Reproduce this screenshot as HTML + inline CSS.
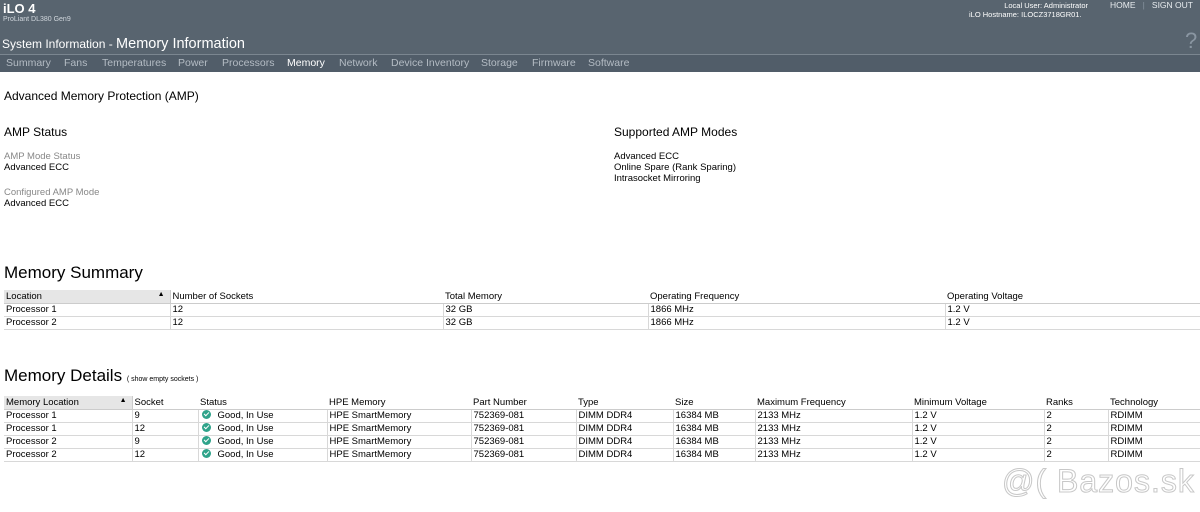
<!DOCTYPE html><html><head><style>
*{margin:0;padding:0;box-sizing:border-box}
body{width:1200px;height:512px;overflow:hidden;background:#fff;font-family:"Liberation Sans",Arial,sans-serif;color:#000;position:relative}
.a{position:absolute;white-space:nowrap}
#hd{position:absolute;left:0;top:0;width:1200px;height:55px;background:#58646f;border-bottom:1px solid #7b8690}
#nv{position:absolute;left:0;top:55px;width:1200px;height:17px;background:#515d69}
.nv{position:absolute;top:57px;font-size:10.5px;color:#b4bcc4}
.w{color:#fff}
table{position:absolute;border-collapse:collapse;font-size:9.5px;left:4px}
td{height:13px;padding:0 2px;border-bottom:1px solid #d8d8d8;border-left:1px solid #d8d8d8;vertical-align:middle}
td:first-child{border-left:none}
tr.h td{border-left:none;border-bottom:1px solid #ccc}
tr.h td:first-child{background:#e6e6e6;border-right:1px solid #ccc}
.ck{display:inline-block;width:9px;height:9px;border-radius:50%;background:#2fa38a;vertical-align:-1px;margin:0 7px 0 1px;position:relative}
.ck:after{content:"";position:absolute;left:2px;top:1.5px;width:4px;height:2px;border-left:1.5px solid #fff;border-bottom:1.5px solid #fff;transform:rotate(-45deg)}
</style></head><body>
<div id="hd"></div><div id="nv"></div>
<div class="a w" style="left:3px;top:1px;font-size:13px;font-weight:bold">iLO 4</div>
<div class="a" style="left:3px;top:16px;font-size:7px;color:#d0d6dc">ProLiant DL380 Gen9</div>
<div class="a w" style="left:2px;top:36px;font-size:12px">System Information - <span style="font-size:14.5px">Memory Information</span></div>
<div class="a w" style="left:1000px;top:1px;font-size:7.5px;text-align:right;width:88px">Local User: Administrator</div>
<div class="a w" style="left:969px;top:10px;font-size:7.5px">iLO Hostname: ILOCZ3718GR01.</div>
<div class="a" style="left:1110px;top:0px;font-size:8.5px;color:#e8ecef">HOME &nbsp;&nbsp;<span style="color:#8995a0">|</span>&nbsp;&nbsp; SIGN OUT</div>
<div class="a" style="left:1185px;top:28px;font-size:22px;color:#8a96a2">?</div>
<div class="nv" style="left:6px">Summary</div><div class="nv" style="left:64px">Fans</div><div class="nv" style="left:102px">Temperatures</div><div class="nv" style="left:178px">Power</div><div class="nv" style="left:222px">Processors</div><div class="nv w" style="left:287px">Memory</div><div class="nv" style="left:339px">Network</div><div class="nv" style="left:391px">Device Inventory</div><div class="nv" style="left:481px">Storage</div><div class="nv" style="left:532px">Firmware</div><div class="nv" style="left:588px">Software</div>
<div class="a" style="left:4px;top:89px;font-size:12px">Advanced Memory Protection (AMP)</div>
<div class="a" style="left:4px;top:125px;font-size:12px">AMP Status</div>
<div class="a" style="left:4px;top:151px;font-size:9.5px;color:#888">AMP Mode Status</div>
<div class="a" style="left:4px;top:162px;font-size:9.5px">Advanced ECC</div>
<div class="a" style="left:4px;top:187px;font-size:9.5px;color:#888">Configured AMP Mode</div>
<div class="a" style="left:4px;top:198px;font-size:9.5px">Advanced ECC</div>
<div class="a" style="left:614px;top:125px;font-size:12px">Supported AMP Modes</div>
<div class="a" style="left:614px;top:151px;font-size:9.5px;line-height:11px">Advanced ECC<br>Online Spare (Rank Sparing)<br>Intrasocket Mirroring</div>
<div class="a" style="left:4px;top:263px;font-size:17px">Memory Summary</div>
<table style="top:290px;width:1196px">
<tr class="h"><td style="width:166px">Location<span style="float:right;font-size:7px;margin-right:3px">▲</span></td><td style="width:273px">Number of Sockets</td><td style="width:205px">Total Memory</td><td style="width:297px">Operating Frequency</td><td>Operating Voltage</td></tr>
<tr><td>Processor 1</td><td>12</td><td>32 GB</td><td>1866 MHz</td><td>1.2 V</td></tr>
<tr><td>Processor 2</td><td>12</td><td>32 GB</td><td>1866 MHz</td><td>1.2 V</td></tr>
</table>
<div class="a" style="left:4px;top:366px;font-size:17px">Memory Details <span style="font-size:7px">( show empty sockets )</span></div>
<table style="top:396px;width:1196px">
<tr class="h"><td style="width:128px">Memory Location<span style="float:right;font-size:7px;margin-right:3px">▲</span></td><td style="width:66px">Socket</td><td style="width:129px">Status</td><td style="width:144px">HPE Memory</td><td style="width:105px">Part Number</td><td style="width:97px">Type</td><td style="width:82px">Size</td><td style="width:157px">Maximum Frequency</td><td style="width:132px">Minimum Voltage</td><td style="width:64px">Ranks</td><td>Technology</td></tr>
<tr><td>Processor 1</td><td>9</td><td><span class="ck"></span>Good, In Use</td><td>HPE SmartMemory</td><td>752369-081</td><td>DIMM DDR4</td><td>16384 MB</td><td>2133 MHz</td><td>1.2 V</td><td>2</td><td>RDIMM</td></tr>
<tr><td>Processor 1</td><td>12</td><td><span class="ck"></span>Good, In Use</td><td>HPE SmartMemory</td><td>752369-081</td><td>DIMM DDR4</td><td>16384 MB</td><td>2133 MHz</td><td>1.2 V</td><td>2</td><td>RDIMM</td></tr>
<tr><td>Processor 2</td><td>9</td><td><span class="ck"></span>Good, In Use</td><td>HPE SmartMemory</td><td>752369-081</td><td>DIMM DDR4</td><td>16384 MB</td><td>2133 MHz</td><td>1.2 V</td><td>2</td><td>RDIMM</td></tr>
<tr><td>Processor 2</td><td>12</td><td><span class="ck"></span>Good, In Use</td><td>HPE SmartMemory</td><td>752369-081</td><td>DIMM DDR4</td><td>16384 MB</td><td>2133 MHz</td><td>1.2 V</td><td>2</td><td>RDIMM</td></tr>
</table>
<div class="a" style="left:1002px;top:463px;font-size:32px;color:#fff;-webkit-text-stroke:1px #c8c8c8;letter-spacing:1px">@( Bazos.sk</div>
</body></html>
